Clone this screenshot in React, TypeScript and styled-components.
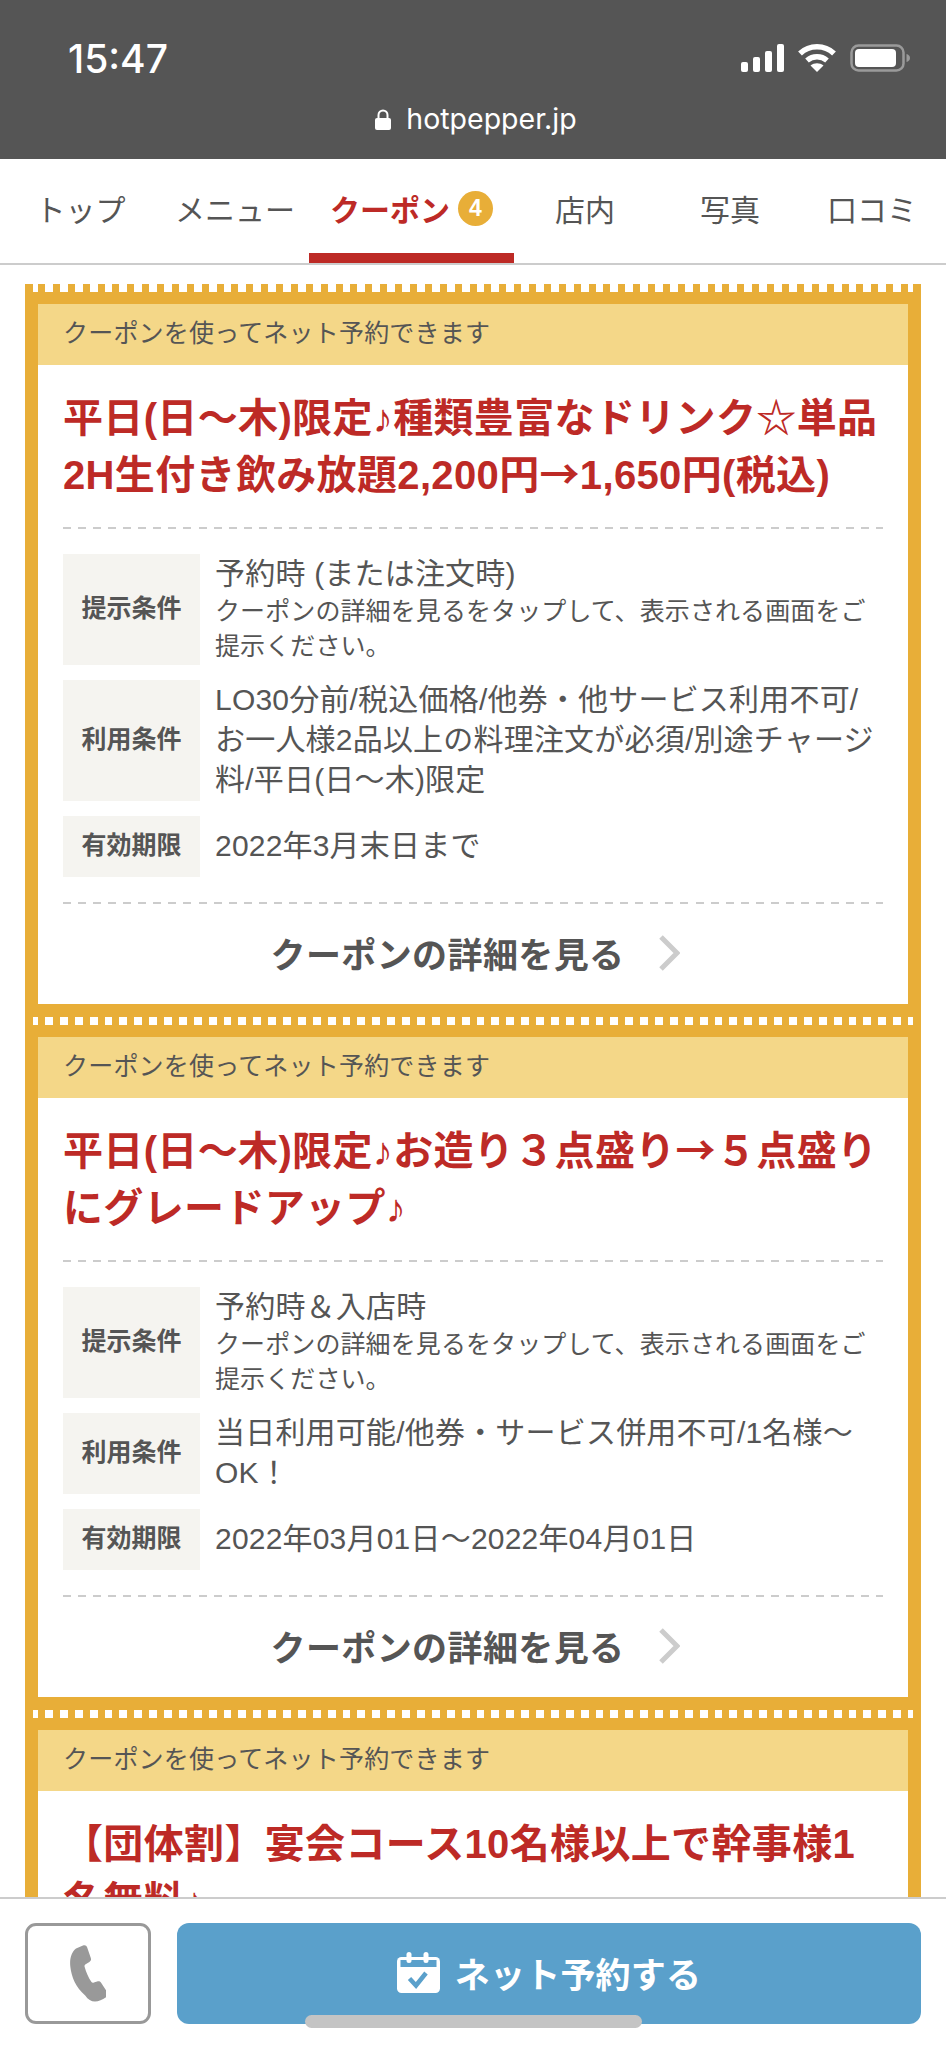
import type { ReactNode } from "react";
import styled, { createGlobalStyle } from "styled-components";

const ORANGE = "#e8ae38";
const RED = "#bd2a26";
const TEXT = "#555";

const GlobalStyle = createGlobalStyle`
  html, body {
    margin: 0;
    padding: 0;
    height: 2048px;
    overflow: hidden;
    background: #fff;
  }
  body {
    font-family: "Liberation Sans", "Noto Sans CJK JP", sans-serif;
    color: ${TEXT};
  }
`;

const Page = styled.div`
  position: relative;
  width: 946px;
  height: 2048px;
  overflow: hidden;
  background: #fff;
`;

// status bar + address bar
const BrowserBar = styled.header`
  height: 159px;
  background: #555;
  color: #fff;
  display: flex;
  flex-direction: column;
`;

const StatusRow = styled.div`
  display: flex;
  align-items: center;
  justify-content: space-between;
  padding: 36px 36px 0 68px;
  height: 44px;
`;

const Clock = styled.span`
  font-family: "Inter", "Liberation Sans", sans-serif;
  font-size: 39px;
  font-weight: 500;
`;

const StatusIcons = styled.div`
  display: flex;
  align-items: center;
  gap: 14px;
`;

const AddressRow = styled.div`
  display: flex;
  align-items: center;
  justify-content: center;
  gap: 15px;
  margin-top: 19px;
  padding-left: 6px;
  font-family: "Inter", "Liberation Sans", sans-serif;
  font-size: 28.5px;
  line-height: 40px;
`;

const Tabs = styled.nav`
  display: grid;
  grid-template-columns: 161px 148px 205px 142px 148px 136px;
  height: 106px;
  box-sizing: border-box;
  border-bottom: 2px solid #ccc;
`;

const Tab = styled.div<{ $active?: boolean }>`
  display: flex;
  align-items: center;
  justify-content: center;
  gap: 8px;
  height: 104px;
  box-sizing: border-box;
  padding-top: 4px;
  font-size: 30px;
  white-space: nowrap;
  color: ${(p) => (p.$active ? RED : TEXT)};
  font-weight: ${(p) => (p.$active ? 700 : 400)};
  border-bottom: 10px solid ${(p) => (p.$active ? RED : "transparent")};
`;

const Badge = styled.span`
  display: flex;
  align-items: center;
  justify-content: center;
  width: 35px;
  height: 35px;
  border-radius: 50%;
  background: ${ORANGE};
  color: #fff;
  font-size: 23px;
`;

const List = styled.main`
  margin: 19px 25px 0;
`;

const Coupon = styled.section`
  background: ${ORANGE};
`;

// ticket edge: white notches on the orange strip
const Perforation = styled.div`
  height: 8px;
  background:
    linear-gradient(90deg, ${ORANGE} 8px, #fff 8px) left / 13px 8px no-repeat,
    linear-gradient(270deg, ${ORANGE} 8px, #fff 8px) right / 13px 8px no-repeat,
    repeating-linear-gradient(90deg, ${ORANGE} 0 7px, #fff 7px 14.88px) 13px 0 / calc(100% - 26px) 8px no-repeat;
`;

const Inner = styled.div`
  margin: 12px 13px 0;
  padding-bottom: 13px;
`;

const Band = styled.div`
  height: 61px;
  box-sizing: border-box;
  display: flex;
  align-items: center;
  padding: 0 0 8px 25px;
  background: #f4d788;
  font-size: 25px;
  letter-spacing: 0.2px;
`;

const Body = styled.div`
  background: #fff;
  padding: 25px 25px 0;
`;

const Title = styled.h2`
  margin: 0 0 23px;
  height: 114px;
  font-size: 40px;
  line-height: 57px;
  font-weight: 700;
  letter-spacing: 0.35px;
  color: ${RED};
`;

// the arrow has to come from the CJK font to be full width
const Arrow = styled.span`
  display: inline-block;
  line-height: 1;
  font-family: "Noto Sans CJK JP", sans-serif;
`;

const DashedLine = styled.div`
  height: 2px;
  background: repeating-linear-gradient(90deg, #ccc 0 8px, transparent 8px 15.06px);
`;

const Conditions = styled.div`
  display: flex;
  flex-direction: column;
  gap: 15px;
  padding: 25px 0;
`;

const Row = styled.div`
  display: flex;
  gap: 15px;
  min-height: 61px;
`;

const Label = styled.div`
  flex: 0 0 137px;
  box-sizing: border-box;
  display: flex;
  align-items: center;
  justify-content: center;
  padding-bottom: 8px;
  background: #f5f4f0;
  font-size: 25px;
  font-weight: 700;
`;

const Value = styled.div`
  flex: 1;
  align-self: center;
  padding-bottom: 1px;
  font-size: 30px;
  line-height: 40px;
  letter-spacing: 0.2px;
`;

const Note = styled.div`
  font-size: 25px;
  line-height: 35px;
  letter-spacing: 0.1px;
`;

const DetailLink = styled.div`
  height: 100px;
  box-sizing: border-box;
  display: flex;
  align-items: center;
  justify-content: center;
  gap: 33px;
  padding: 0 0 3px 4px;
  font-size: 35px;
  font-weight: 700;
  letter-spacing: 0.4px;
`;

const Footer = styled.footer`
  position: absolute;
  left: 0;
  right: 0;
  bottom: 0;
  height: 151px;
  box-sizing: border-box;
  padding: 24px 25px 0;
  display: flex;
  gap: 26px;
  align-items: flex-start;
  background: #fff;
  border-top: 2px solid #ccc;
`;

const PhoneButton = styled.div`
  flex: 0 0 126px;
  height: 101px;
  box-sizing: border-box;
  display: flex;
  align-items: center;
  justify-content: center;
  background: #fff;
  border: 3px solid #999;
  border-radius: 11px;
`;

const ReserveButton = styled.div`
  flex: 1;
  height: 101px;
  box-sizing: border-box;
  display: flex;
  align-items: center;
  justify-content: center;
  gap: 15px;
  padding-bottom: 3px;
  background: #5aa0cb;
  border-radius: 12px;
  color: #fff;
  font-size: 35px;
  font-weight: 700;
  letter-spacing: 0.2px;
`;

const HomeIndicator = styled.div`
  position: absolute;
  left: 305px;
  bottom: 20px;
  width: 337px;
  height: 13px;
  border-radius: 7px;
  background: #c4c4c4;
`;

const Chevron = () => (
  <svg width="22" height="36" viewBox="0 0 22 36" fill="none">
    <path d="M3 2l16 16L3 34" stroke="#ccc" strokeWidth="5" />
  </svg>
);

const SignalIcon = () => (
  <svg width="43" height="28" viewBox="0 0 43 28" fill="#fff">
    <rect x="0" y="18" width="7" height="10" rx="2" />
    <rect x="12" y="13" width="7" height="15" rx="2" />
    <rect x="24" y="7" width="7" height="21" rx="2" />
    <rect x="36" y="0" width="7" height="28" rx="2" />
  </svg>
);

const WifiIcon = () => (
  <svg width="38" height="28" viewBox="0 0 38 28" fill="none" stroke="#fff" strokeWidth="5.5">
    <path d="M2 9.500C11.500 .5 26.500 .5 36 9.500" />
    <path d="M9 16.500c5.800-5 14.200-5 20 0" />
    <path d="M19 28l-6.500-6.500c3.800-3 9.200-3 13 0z" fill="#fff" stroke="none" />
  </svg>
);

const BatteryIcon = () => (
  <svg width="60" height="28" viewBox="0 0 60 28" fill="none">
    <rect x="1.500" y="1.500" width="52" height="25" rx="7" stroke="#9a9a9a" strokeWidth="2.500" />
    <rect x="5" y="5" width="41" height="18" rx="4" fill="#fff" />
    <path d="M56.500 10c2 .6 3.500 2 3.500 4s-1.500 3.400-3.500 4z" fill="#9a9a9a" />
  </svg>
);

const LockIcon = () => (
  <svg width="16" height="21" viewBox="0 0 16 21">
    <path d="M3.500 10V6a4.500 4.500 0 0 1 9 0v4" fill="none" stroke="#fff" strokeWidth="2" />
    <rect x="0" y="9" width="16" height="12" rx="2" fill="#fff" />
  </svg>
);

const PhoneIcon = () => (
  <svg width="36" height="58" viewBox="0 0 36 58">
    <path
      fill="#999"
      d="M6 3.500L13 .5c2-.7 3.500 0 4.200 2l3.600 10.500c.6 1.700 0 3-1.400 3.900l-3.800 2.300c-1 .7-1.300 1.500-1 2.600 1.600 5.700 3.800 10.700 6.700 15 .6 .9 1.500 1.200 2.600 .8l3.200-1.100c1.600-.5 3-.1 4 1.200l6.200 9.600c1.100 1.800 .7 3.500-1 4.700-3.800 2.800-7.500 4.400-11.300 4.400-3.800 0-7-2-9.800-6C5.700 42.500 1.500 32 .3 21.500-.5 14 1.200 7.500 6 3.500z"
    />
  </svg>
);

const CalendarIcon = () => (
  <svg width="43" height="41" viewBox="0 0 43 41">
    <rect x="0" y="5" width="43" height="36" rx="4.500" fill="#fff" />
    <rect x="3.500" y="8" width="36" height="7" fill="#5aa0cb" />
    <rect x="9.500" y="0" width="5" height="11" rx="2.500" fill="#fff" />
    <rect x="26.500" y="0" width="5" height="11" rx="2.500" fill="#fff" />
    <path d="M12.500 26.500l6.500 7 10-12.500" fill="none" stroke="#5aa0cb" strokeWidth="4.500" />
  </svg>
);

type Condition = { label: string; value: string; note?: string };
type CouponData = { title: ReactNode; conditions: Condition[] };

const NOTE = "クーポンの詳細を見るをタップして、表示される画面をご提示ください。";

const coupons: CouponData[] = [
  {
    title: (
      <>
        平日(日〜木)限定♪種類豊富なドリンク☆単品2H生付き飲み放題2,200円<Arrow>→</Arrow>1,650円(税込)
      </>
    ),
    conditions: [
      { label: "提示条件", value: "予約時 (または注文時)", note: NOTE },
      {
        label: "利用条件",
        value: "LO30分前/税込価格/他券・他サービス利用不可/お一人様2品以上の料理注文が必須/別途チャージ料/平日(日〜木)限定",
      },
      { label: "有効期限", value: "2022年3月末日まで" },
    ],
  },
  {
    title: (
      <>
        平日(日〜木)限定♪お造り３点盛り<Arrow>→</Arrow>５点盛りにグレードアップ♪
      </>
    ),
    conditions: [
      { label: "提示条件", value: "予約時＆入店時", note: NOTE },
      { label: "利用条件", value: "当日利用可能/他券・サービス併用不可/1名様〜OK！" },
      { label: "有効期限", value: "2022年03月01日〜2022年04月01日" },
    ],
  },
  {
    title: "【団体割】宴会コース10名様以上で幹事様1名無料♪",
    conditions: [],
  },
];

const App = () => {
  return (
    <Page>
      <GlobalStyle />
      <BrowserBar>
        <StatusRow>
          <Clock>15:47</Clock>
          <StatusIcons>
            <SignalIcon />
            <WifiIcon />
            <BatteryIcon />
          </StatusIcons>
        </StatusRow>
        <AddressRow>
          <LockIcon />
          hotpepper.jp
        </AddressRow>
      </BrowserBar>

      <Tabs>
        <Tab>トップ</Tab>
        <Tab>メニュー</Tab>
        <Tab $active>
          クーポン<Badge>4</Badge>
        </Tab>
        <Tab>店内</Tab>
        <Tab>写真</Tab>
        <Tab>口コミ</Tab>
      </Tabs>

      <List>
        {coupons.map((coupon, i) => (
          <Coupon key={i}>
            <Perforation />
            <Inner>
              <Band>クーポンを使ってネット予約できます</Band>
              <Body>
                <Title>{coupon.title}</Title>
                {coupon.conditions.length > 0 && (
                  <>
                    <DashedLine />
                    <Conditions>
                      {coupon.conditions.map((c) => (
                        <Row key={c.label}>
                          <Label>{c.label}</Label>
                          <Value>
                            {c.value}
                            {c.note && <Note>{c.note}</Note>}
                          </Value>
                        </Row>
                      ))}
                    </Conditions>
                    <DashedLine />
                    <DetailLink>
                      クーポンの詳細を見る
                      <Chevron />
                    </DetailLink>
                  </>
                )}
              </Body>
            </Inner>
          </Coupon>
        ))}
      </List>

      <Footer>
        <PhoneButton>
          <PhoneIcon />
        </PhoneButton>
        <ReserveButton>
          <CalendarIcon />
          ネット予約する
        </ReserveButton>
      </Footer>
      <HomeIndicator />
    </Page>
  );
};

export default App;
